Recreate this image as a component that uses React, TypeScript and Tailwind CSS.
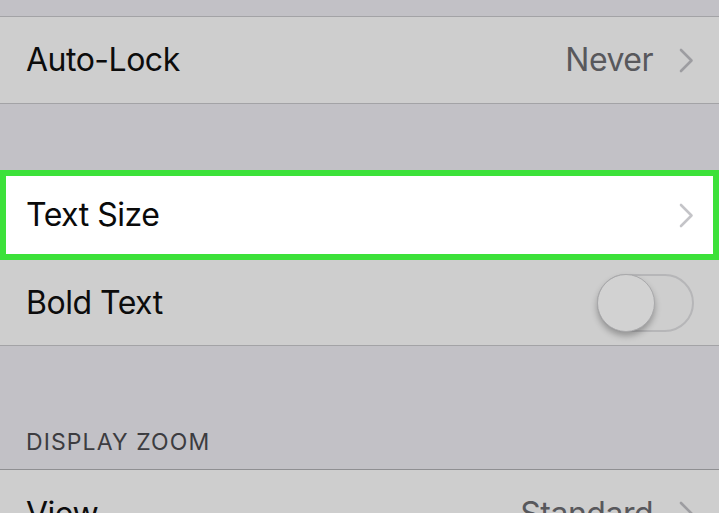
import React from "react";

function Chevron({ color }: { color: string }) {
  return (
    <svg width="15" height="25" viewBox="0 0 15 25" fill="none" className="shrink-0">
      <polyline points="2,2 12.5,12.5 2,23" stroke={color} strokeWidth="2.6" strokeLinecap="round" strokeLinejoin="round" />
    </svg>
  );
}

function Toggle() {
  return (
    <div className="relative w-[97px] h-[58px] rounded-full border-2 border-[#b6b6b8] bg-[#cecece]">
      <div className="absolute left-[-2px] top-[-2px] w-[58px] h-[58px] rounded-full bg-[#d2d2d2] border border-[#a9a9ab] shadow-[0_4px_6px_rgba(0,0,0,0.28)]" />
    </div>
  );
}

export default function App() {
  return (
    <div className="w-[719px] h-[513px] overflow-hidden bg-[#c2c1c6] flex flex-col font-['Inter','Liberation_Sans',sans-serif]">
      <div className="h-[16px] shrink-0" />
      <div className="h-[88px] shrink-0 flex items-center justify-between bg-[#cecece] border-y border-[#a3a3a6] pl-[26px] pr-[25px]">
        <span className="text-[32px] text-[#0c0c0c] tracking-[-0.5px]">Auto-Lock</span>
        <div className="flex items-center gap-[26px]">
          <span className="text-[32px] text-[#58585c] tracking-[-0.5px]">Never</span>
          <Chevron color="#9d9da1" />
        </div>
      </div>
      <div className="h-[66px] shrink-0" />
      <div className="h-[90px] shrink-0 flex items-center justify-between bg-white border-[6px] border-[#3ce13a] pl-[20px] pr-[19px]">
        <span className="text-[32px] text-[#0a0a0a] tracking-[-0.5px]">Text Size</span>
        <Chevron color="#c4c4c8" />
      </div>
      <div className="h-[86px] shrink-0 flex items-center justify-between bg-[#cecece] border-b border-[#a3a3a6] pl-[26px] pr-[25px]">
        <span className="text-[32px] text-[#0c0c0c] tracking-[-0.5px]">Bold Text</span>
        <Toggle />
      </div>
      <div className="h-[123px] shrink-0 flex items-end pl-[26px] pb-[15px]">
        <span className="text-[23px] text-[#3c3c40] tracking-[1.1px] leading-none">DISPLAY ZOOM</span>
      </div>
      <div className="h-[88px] shrink-0 flex items-center justify-between bg-[#cecece] border-t border-[#8f8f92] pl-[26px] pr-[25px]">
        <span className="text-[32px] text-[#0c0c0c] tracking-[-0.5px]">View</span>
        <div className="flex items-center gap-[26px]">
          <span className="text-[32px] text-[#58585c] tracking-[-0.5px]">Standard</span>
          <Chevron color="#9d9da1" />
        </div>
      </div>
    </div>
  );
}
